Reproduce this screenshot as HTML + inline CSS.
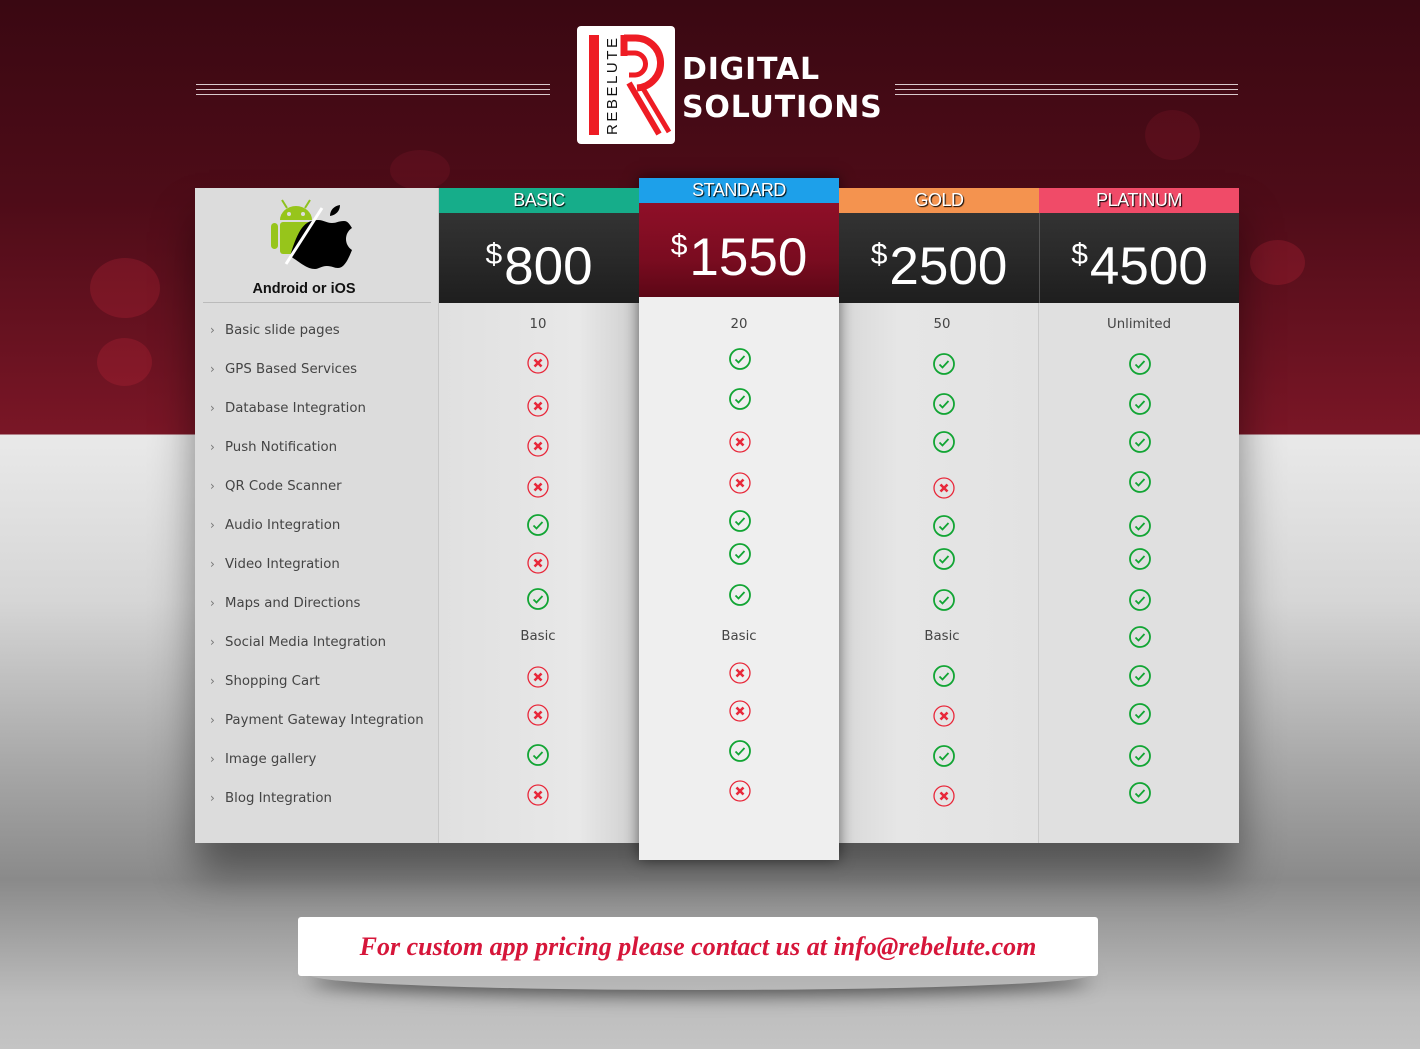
<!DOCTYPE html>
<html><head><meta charset="utf-8"><style>
*{margin:0;padding:0;box-sizing:border-box}
body{width:1420px;height:1049px;overflow:hidden;position:relative;font-family:"Liberation Sans","DejaVu Sans",sans-serif;
background:linear-gradient(#3a0812 0px,#4e0c18 200px,#7a1626 434px,#e9e9e9 435px,#d6d6d6 600px,#a9a9a9 760px,#8a8a8a 880px,#bdbdbd 1000px,#c4c4c4 1049px);}
.abs{position:absolute}
.rule{position:absolute;height:1px;background:#d9c9cc}
.col{position:absolute;top:303px;height:540px;}
.hd{position:absolute;height:25px;color:#fff;text-align:center;font-size:18px;line-height:25px;text-shadow:1px 1px 1px #000;letter-spacing:-0.5px}
.pr{position:absolute;height:90px;color:#fff;text-align:center;font-size:53px;line-height:84px;background:linear-gradient(#333,#2a2a2a 45%,#1e1e1e)}
.pr sup{font-size:30px;vertical-align:20px;margin-right:2px}
.f{position:absolute;left:210px;color:#444;font-family:"DejaVu Sans",sans-serif;font-size:13.3px}
.f:before{content:"›";position:absolute;left:0;color:#777;font-size:12px}
.f span{margin-left:15px}
.t{position:absolute;font-size:13.3px;color:#444;font-family:"DejaVu Sans",sans-serif;text-align:center;width:200px}
svg.i{position:absolute;width:22px;height:22px}
.bub{position:absolute;border-radius:50%;background:rgba(200,40,60,.25)}
</style></head><body>
<svg width="0" height="0" style="position:absolute"><defs>
<symbol id="c" viewBox="0 0 22 22"><circle cx="11" cy="11" r="10" fill="none" stroke="#12a534" stroke-width="1.8"/><path d="M6.5 11.5l3 3 6-6.5" fill="none" stroke="#12a534" stroke-width="1.8"/></symbol>
<symbol id="x" viewBox="0 0 22 22"><circle cx="11" cy="11" r="10" fill="none" stroke="#e8283a" stroke-width="1.3"/><path d="M7.5 7.5l7 7M14.5 7.5l-7 7" stroke="#e8283a" stroke-width="2.6"/></symbol>
</defs></svg>
<div class="bub" style="left:90px;top:258px;width:70px;height:60px"></div>
<div class="bub" style="left:97px;top:338px;width:55px;height:48px"></div>
<div class="bub" style="left:1250px;top:240px;width:55px;height:45px"></div>
<div class="bub" style="left:390px;top:150px;width:60px;height:40px;opacity:.5"></div>
<div class="bub" style="left:1145px;top:110px;width:55px;height:50px;opacity:.5"></div>
<!-- header -->
<div class="rule" style="left:196px;top:84px;width:354px"></div><div class="rule" style="left:196px;top:89px;width:354px"></div><div class="rule" style="left:196px;top:94px;width:354px"></div>
<div class="rule" style="left:895px;top:84px;width:343px"></div><div class="rule" style="left:895px;top:89px;width:343px"></div><div class="rule" style="left:895px;top:94px;width:343px"></div>
<div class="abs" style="left:577px;top:26px;width:98px;height:118px;background:#fff;border-radius:4px">
<svg width="98" height="118" viewBox="0 0 98 118">
<rect x="12" y="9" width="10" height="100" fill="#ee1c24"/>
<path d="M47 12H57A25 25 0 0 1 60 62" fill="none" stroke="#ee1c24" stroke-width="7"/>
<path d="M47 27H57A11 11 0 0 1 58 49H52" fill="none" stroke="#ee1c24" stroke-width="5"/>
<path d="M47 9V30" stroke="#ee1c24" stroke-width="7"/>
<path d="M52 57L82 108" stroke="#ee1c24" stroke-width="6"/>
<path d="M64 59L92 106" stroke="#ee1c24" stroke-width="5"/>
<text transform="translate(40,109) rotate(-90)" font-family="Liberation Sans" font-size="15" fill="#111" textLength="98" letter-spacing="1">REBELUTE</text>
</svg></div>
<div class="abs" style="left:682px;top:51px;color:#fff;font-family:'DejaVu Sans',sans-serif;font-weight:bold;font-size:30px;line-height:38px;letter-spacing:0.8px">DIGITAL<br>SOLUTIONS</div>
<!-- table -->
<div class="abs" style="left:195px;top:188px;width:1044px;height:655px;box-shadow:0 30px 40px rgba(0,0,0,.45)"></div>
<div class="abs" style="left:195px;top:188px;width:244px;height:655px;background:#dcdcdc;border-right:1px solid #c8c8c8"></div>
<div class="abs" style="left:203px;top:302px;width:228px;height:1px;background:#bbb"></div>
<svg class="abs" style="left:266px;top:194px" width="86" height="84" viewBox="0 0 86 84">
<path d="M16 6l5 8M44 6l-5 8" stroke="#8ec21f" stroke-width="2"/>
<path d="M14 26a16 14 0 0 1 32 0z" fill="#97c51b"/><circle cx="23" cy="20" r="2" fill="#ddd"/><circle cx="37" cy="20" r="2" fill="#ddd"/>
<rect x="14" y="28" width="32" height="32" rx="3" fill="#97c51b"/><rect x="5" y="29" width="7" height="26" rx="3.5" fill="#97c51b"/>
<path d="M24 62c8-26 14-36 28-36 6 0 8 3 14 3 5 0 6-2 12-2 4 0 6 4 8 7-8 5-8 17 0 22-4 10-8 18-14 18-4 0-6-2-11-2-6 0-8 3-12 3-8 0-14-6-25-13z" fill="#000"/>
<path d="M64 22c0-6 4-10 10-11 0 6-4 10-10 11z" fill="#000"/>
<path d="M20 70L56 14" stroke="#fff" stroke-width="3"/>
</svg>
<div class="abs" style="left:195px;top:281px;width:218px;text-align:center;font-weight:bold;font-size:14.5px;color:#111">Android or iOS</div>

<div class="col" style="left:439px;width:200px;background:linear-gradient(90deg,#e0e0e0,#e8e8e8 70%,#cfcfcf)"></div>
<div class="col" style="left:839px;width:200px;background:linear-gradient(90deg,#d8d8d8,#e6e6e6 30%,#e2e2e2);border-right:1px solid #cacaca"></div>
<div class="col" style="left:1039px;width:200px;background:#e0e0e0"></div>
<div class="abs" style="left:639px;top:178px;width:200px;height:682px;background:#efefef;box-shadow:0 0 14px rgba(0,0,0,.55)"></div>

<div class="hd" style="left:439px;top:188px;width:200px;background:#16ad8a">BASIC</div>
<div class="hd" style="left:639px;top:178px;width:200px;background:#1da0ea">STANDARD</div>
<div class="hd" style="left:839px;top:188px;width:200px;background:#f4934f">GOLD</div>
<div class="hd" style="left:1039px;top:188px;width:200px;background:#f04b68">PLATINUM</div>
<div class="pr" style="left:439px;top:213px;width:200px"><sup>$</sup>800</div>
<div class="pr" style="left:639px;top:203px;width:200px;height:94px;line-height:86px;background:linear-gradient(#8f0f28,#7a0c20 60%,#5c0716)"><sup>$</sup>1550</div>
<div class="pr" style="left:839px;top:213px;width:200px"><sup>$</sup>2500</div>
<div class="pr" style="left:1039px;top:213px;width:200px;border-left:1px solid #555"><sup>$</sup>4500</div>

<div class="f" style="top:323px"><span>Basic slide pages</span></div>
<div class="f" style="top:362px"><span>GPS Based Services</span></div>
<div class="f" style="top:401px"><span>Database Integration</span></div>
<div class="f" style="top:440px"><span>Push Notification</span></div>
<div class="f" style="top:479px"><span>QR Code Scanner</span></div>
<div class="f" style="top:518px"><span>Audio Integration</span></div>
<div class="f" style="top:557px"><span>Video Integration</span></div>
<div class="f" style="top:596px"><span>Maps and Directions</span></div>
<div class="f" style="top:635px"><span>Social Media Integration</span></div>
<div class="f" style="top:674px"><span>Shopping Cart</span></div>
<div class="f" style="top:713px"><span>Payment Gateway Integration</span></div>
<div class="f" style="top:752px"><span>Image gallery</span></div>
<div class="f" style="top:791px"><span>Blog Integration</span></div>

<div class="t" style="left:438px;top:317px">10</div>
<div class="t" style="left:639px;top:317px">20</div>
<div class="t" style="left:842px;top:317px">50</div>
<div class="t" style="left:1039px;top:317px">Unlimited</div>
<div class="t" style="left:438px;top:629px">Basic</div>
<div class="t" style="left:639px;top:629px">Basic</div>
<div class="t" style="left:842px;top:629px">Basic</div>

<svg class="i" style="left:527px;top:352px"><use href="#x"/></svg>
<svg class="i" style="left:527px;top:395px"><use href="#x"/></svg>
<svg class="i" style="left:527px;top:435px"><use href="#x"/></svg>
<svg class="i" style="left:527px;top:476px"><use href="#x"/></svg>
<svg class="i" style="left:527px;top:514px"><use href="#c"/></svg>
<svg class="i" style="left:527px;top:552px"><use href="#x"/></svg>
<svg class="i" style="left:527px;top:588px"><use href="#c"/></svg>
<svg class="i" style="left:527px;top:666px"><use href="#x"/></svg>
<svg class="i" style="left:527px;top:704px"><use href="#x"/></svg>
<svg class="i" style="left:527px;top:744px"><use href="#c"/></svg>
<svg class="i" style="left:527px;top:784px"><use href="#x"/></svg>
<svg class="i" style="left:729px;top:348px"><use href="#c"/></svg>
<svg class="i" style="left:729px;top:388px"><use href="#c"/></svg>
<svg class="i" style="left:729px;top:431px"><use href="#x"/></svg>
<svg class="i" style="left:729px;top:472px"><use href="#x"/></svg>
<svg class="i" style="left:729px;top:510px"><use href="#c"/></svg>
<svg class="i" style="left:729px;top:543px"><use href="#c"/></svg>
<svg class="i" style="left:729px;top:584px"><use href="#c"/></svg>
<svg class="i" style="left:729px;top:662px"><use href="#x"/></svg>
<svg class="i" style="left:729px;top:700px"><use href="#x"/></svg>
<svg class="i" style="left:729px;top:740px"><use href="#c"/></svg>
<svg class="i" style="left:729px;top:780px"><use href="#x"/></svg>
<svg class="i" style="left:933px;top:353px"><use href="#c"/></svg>
<svg class="i" style="left:933px;top:393px"><use href="#c"/></svg>
<svg class="i" style="left:933px;top:431px"><use href="#c"/></svg>
<svg class="i" style="left:933px;top:477px"><use href="#x"/></svg>
<svg class="i" style="left:933px;top:515px"><use href="#c"/></svg>
<svg class="i" style="left:933px;top:548px"><use href="#c"/></svg>
<svg class="i" style="left:933px;top:589px"><use href="#c"/></svg>
<svg class="i" style="left:933px;top:665px"><use href="#c"/></svg>
<svg class="i" style="left:933px;top:705px"><use href="#x"/></svg>
<svg class="i" style="left:933px;top:745px"><use href="#c"/></svg>
<svg class="i" style="left:933px;top:785px"><use href="#x"/></svg>
<svg class="i" style="left:1129px;top:353px"><use href="#c"/></svg>
<svg class="i" style="left:1129px;top:393px"><use href="#c"/></svg>
<svg class="i" style="left:1129px;top:431px"><use href="#c"/></svg>
<svg class="i" style="left:1129px;top:471px"><use href="#c"/></svg>
<svg class="i" style="left:1129px;top:515px"><use href="#c"/></svg>
<svg class="i" style="left:1129px;top:548px"><use href="#c"/></svg>
<svg class="i" style="left:1129px;top:589px"><use href="#c"/></svg>
<svg class="i" style="left:1129px;top:626px"><use href="#c"/></svg>
<svg class="i" style="left:1129px;top:665px"><use href="#c"/></svg>
<svg class="i" style="left:1129px;top:703px"><use href="#c"/></svg>
<svg class="i" style="left:1129px;top:745px"><use href="#c"/></svg>
<svg class="i" style="left:1129px;top:782px"><use href="#c"/></svg>

<div class="abs" style="left:310px;top:960px;width:780px;height:30px;border-radius:50%;box-shadow:0 6px 18px rgba(0,0,0,.55)"></div>
<div class="abs" style="left:298px;top:917px;width:800px;height:59px;background:#fff;border-radius:3px;text-align:center;line-height:59px;color:#d6163a;font-family:'Liberation Serif',serif;font-style:italic;font-weight:bold;font-size:26px">For custom app pricing please contact us at info@rebelute.com</div>
</body></html>
